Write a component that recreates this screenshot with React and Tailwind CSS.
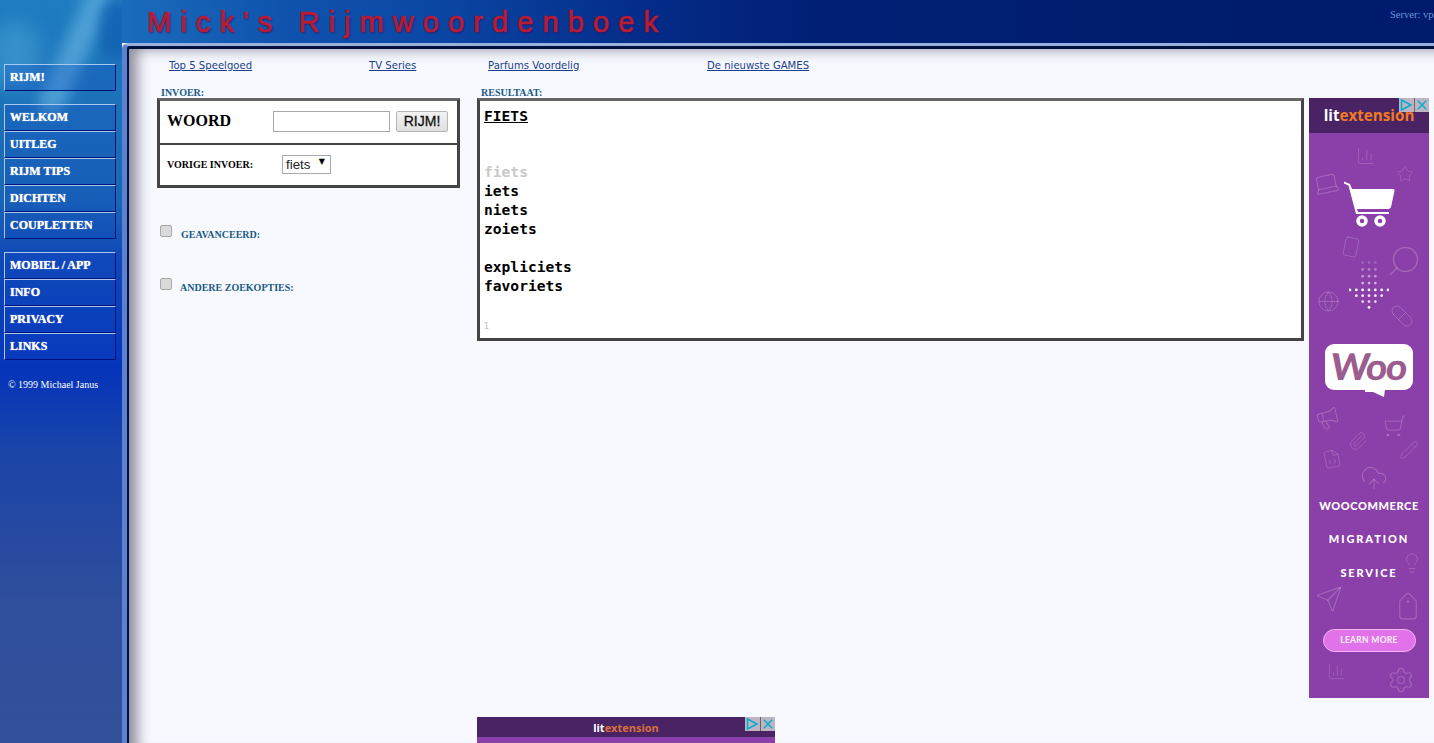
import { BarChart3, Laptop, Star, ShoppingCart, Smartphone, Search, Globe, Pill, Megaphone, Paperclip, Pencil, FileCode, CloudUpload, Lightbulb, Send, Tag, Settings } from "lucide-react";

const menuTop = ["RIJM!"];
const menuMiddle = ["WELKOM", "UITLEG", "RIJM TIPS", "DICHTEN", "COUPLETTEN"];
const menuBottom = ["MOBIEL / APP", "INFO", "PRIVACY", "LINKS"];

//faint icons in the ad background, places relative to the ad body
const adIcons = [
    { Icon: BarChart3, size: 20, cls: "left-[47px] top-[13px]" },
    { Icon: Laptop, size: 27, cls: "left-[4px] top-[37px] -rotate-12" },
    { Icon: Star, size: 18, cls: "left-[87px] top-[32px]" },
    { Icon: Smartphone, size: 22, cls: "left-[31px] top-[103px] rotate-12" },
    { Icon: Search, size: 36, cls: "left-[77px] top-[110px] -scale-x-100" },
    { Icon: Globe, size: 23, cls: "left-[8px] top-[157px]" },
    { Icon: Pill, size: 24, cls: "left-[81px] top-[171px] rotate-90" },
    { Icon: Megaphone, size: 25, cls: "left-[6px] top-[273px] -rotate-12" },
    { Icon: ShoppingCart, size: 24, cls: "left-[74px] top-[281px] -scale-x-100" },
    { Icon: Paperclip, size: 20, cls: "left-[39px] top-[298px]" },
    { Icon: Pencil, size: 20, cls: "left-[90px] top-[307px]" },
    { Icon: FileCode, size: 20, cls: "left-[13px] top-[316px] -rotate-12" },
    { Icon: CloudUpload, size: 28, cls: "left-[51px] top-[331px]" },
    { Icon: Lightbulb, size: 22, cls: "left-[92px] top-[419px]" },
    { Icon: Send, size: 28, cls: "left-[6px] top-[452px]" },
    { Icon: Tag, size: 28, cls: "left-[85px] top-[462px] rotate-45" },
    { Icon: BarChart3, size: 19, cls: "left-[18px] top-[529px]" },
    { Icon: Settings, size: 28, cls: "left-[78px] top-[533px]" },
];

//dots arrow above the woo logo: [cx, cy, opacity]
const dots = [];
[0, 7, 14, 21].forEach((y) => {
    [13, 19.5, 26].forEach((x) => dots.push([x, y, 0.2 + y * 0.02]));
});
[0, 6.5, 13, 19.5, 26, 32.5, 39].forEach((x) => dots.push([x, 28, 1]));
[6.5, 13, 19.5, 26, 32.5].forEach((x) => dots.push([x, 34, 0.9]));
[13, 19.5, 26].forEach((x) => dots.push([x, 40, 0.8]));
dots.push([19.5, 46, 1]);

const MenuItem = ({ label }) => (
    <div className="h-[27px] w-[112px] flex items-center pl-[5px] pb-[1px] border border-t-[#a9c8f0] border-l-[#a9c8f0] border-r-[#00127a] border-b-[#00127a] bg-[#1048c4]/25 text-white font-bold text-[12px] [text-shadow:0_0_1px_#ffffff]">
        {label}
    </div>
);

const AdChoices = () => (
    <div className="absolute right-0 top-0 flex h-[14px] w-[30px] bg-[#d9d9d9]/80">
        <svg width="15" height="14" viewBox="0 0 15 14" fill="none" stroke="#00aecd" strokeWidth="1.5">
            <path d="M2.5 2 L2.5 12 L12 7 Z" />
        </svg>
        <svg width="15" height="14" viewBox="0 0 15 14" fill="none" stroke="#00aecd" strokeWidth="1.5" className="border-l border-[#666]">
            <path d="M3 2.5 L12 11.5 M12 2.5 L3 11.5" />
        </svg>
    </div>
);

const SideAd = () => (
    <div className="relative w-[120px] h-[600px] shrink-0 bg-[#8b3fa8] font-['Lato',sans-serif]">
        <div className="h-[35px] bg-[#4a2365] flex items-center justify-center text-[15.2px] font-['Open_Sans',sans-serif] font-bold leading-none pt-[1px]">
            <span className="text-white">lit</span>
            <span className="text-[#f07a22]">extension</span>
        </div>
        <AdChoices />
        <div className="relative h-[565px] flex flex-col items-center">
            {adIcons.map(({ Icon, size, cls }, i) => (
                <Icon key={i} size={size} strokeWidth={1} className={"absolute text-white/20 " + cls} />
            ))}
            <svg width="52" height="47" viewBox="0 0 52 47" className="mt-[47px] shrink-0" fill="#fff">
                <path d="M1 1.5 L7 4 L9 9 L50 9 Q52 9 51.5 11 L48 27 Q47.5 29 45 29 L14 29 L15 32 L46 32 L46 34 L13 34 L5.5 5.5 L1 3.5 Z" />
                <circle cx="19" cy="41" r="4" fill="none" stroke="#fff" strokeWidth="3.5" />
                <circle cx="37" cy="41" r="4" fill="none" stroke="#fff" strokeWidth="3.5" />
            </svg>
            <svg width="40" height="50" viewBox="-1 -2 41 50" className="mt-[33px] shrink-0" fill="#fff">
                {dots.map(([cx, cy, o], i) => (
                    <circle key={i} cx={cx} cy={cy} r="1.4" opacity={o} />
                ))}
            </svg>
            <div className="relative mt-[34px] w-[88px] h-[46px] bg-white rounded-[9px] flex items-center justify-center shrink-0">
                <span className="text-[#9b5c8f] text-[37px] font-black leading-none tracking-[-1.5px] -mt-[3px] -skew-x-6 font-['Lato',sans-serif]">Woo</span>
                <svg width="20" height="9" viewBox="0 0 20 9" fill="#fff" className="absolute left-[40px] top-[45px]">
                    <path d="M0 0 L20 0 L19 8 L8 3 L0 3 Z" />
                </svg>
            </div>
            <div className="mt-[109px] h-[14px] leading-[14px] text-white font-black text-[11px] tracking-[0.6px]">WOOCOMMERCE</div>
            <div className="mt-[19px] h-[14px] leading-[14px] text-white font-black text-[11px] tracking-[1.9px]">MIGRATION</div>
            <div className="mt-[20px] h-[14px] leading-[14px] text-white font-black text-[11px] tracking-[1.9px]">SERVICE</div>
            <div className="mt-[49px] w-[93px] h-[23px] rounded-full bg-[#e272ea] border border-[#f3b5f5] flex items-center justify-center text-white/90 font-bold text-[8.5px] tracking-[0.3px]">
                LEARN MORE
            </div>
        </div>
    </div>
);

const App = () => {
    return (
        <div className="w-[1434px] h-[743px] overflow-hidden flex font-['Liberation_Serif',serif]">
            {/* sidebar */}
            <div className="relative overflow-hidden w-[122px] h-full shrink-0 pt-[64px] pl-[4px] bg-[linear-gradient(180deg,#1f7cc0_0px,#1c70b8_120px,#1a66b4_200px,#0f48b8_260px,#0534ba_370px,#1a44a8_450px,#2f4e9c_600px,#33509a_743px)]">
                {/* blurred shapes of the hand in the background picture */}
                <div className="absolute left-[62px] -top-[20px] w-[26px] h-[140px] rotate-[25deg] rounded-full bg-[#5fb0de]/70 blur-[7px]"></div>
                <div className="absolute -left-[10px] top-[20px] w-[50px] h-[70px] rounded-full bg-[#3f9ad2]/70 blur-[10px]"></div>
                <div className="absolute left-[100px] top-[0px] w-[30px] h-[60px] rounded-full bg-[#0f5cb0]/70 blur-[6px]"></div>
                <div className="relative">
                    {menuTop.map((m) => <MenuItem key={m} label={m} />)}
                    <div className="mt-[13px]">
                        {menuMiddle.map((m) => <MenuItem key={m} label={m} />)}
                    </div>
                    <div className="mt-[13px]">
                        {menuBottom.map((m) => <MenuItem key={m} label={m} />)}
                    </div>
                    <div className="mt-[19px] pl-[4px] text-white text-[10px] leading-[12px]">© 1999 Michael Janus</div>
                </div>
            </div>

            {/* header and page */}
            <div className="flex-1 min-w-0 h-full flex flex-col">
                <div className="h-[43px] shrink-0 flex justify-between bg-[linear-gradient(90deg,#1b6cbc_0px,#0f53ae_160px,#0c48a6_300px,#042c88_520px,#001f74_700px,#001a6c_1312px)]">
                    <div className="pl-[25px] pt-[5px] text-[29px] leading-[34px] text-[#b81c34] tracking-[9.1px] font-['Liberation_Sans',sans-serif] [-webkit-text-stroke:0.7px_#b81c34] [text-shadow:1px_1px_2px_#2a1060] whitespace-nowrap">
                        Mick's Rijmwoordenboek
                    </div>
                    <div className="pt-[9px] w-[44px] overflow-hidden whitespace-nowrap text-[10.5px] leading-[12px] text-[#6d94dc]">Server: vps1</div>
                </div>
                <div className="flex-1 min-h-0 border-t-[3px] border-l-[5px] border-t-[#98b0dc] border-l-[#5a82d0] rounded-tl-[6px] bg-[#1a5ab8]">
                    <div className="h-full border-t-[3px] border-l-[2px] border-[#00103f] rounded-tl-[3px] bg-[#f7f9ff] shadow-[inset_14px_6px_14px_-6px_#8a8a9a] pl-[28px] overflow-hidden">
                        <div className="pt-[11px] pl-[12px] h-[38px] flex font-['DejaVu_Sans',sans-serif] text-[10.1px] leading-[12px] text-[#1c3f8c] underline">
                            <div className="w-[200px]">Top 5 Speelgoed</div>
                            <div className="w-[119px]">TV Series</div>
                            <div className="w-[219px]">Parfums Voordelig</div>
                            <div>De nieuwste GAMES</div>
                        </div>
                        <div className="flex">
                            {/* left column */}
                            <div className="w-[303px] shrink-0">
                                <div className="h-[11px] pl-[4px] text-[10px] leading-[11px] font-bold text-[#1a5a84]">INVOER:</div>
                                <div className="h-[90px] border-[3px] border-[#444] border-t-[#666] bg-white flex flex-col">
                                    <div className="h-[42px] flex items-center pl-[7px] pb-[2px]">
                                        <div className="w-[106px] text-[16px] font-bold text-black">WOORD</div>
                                        <input type="text" className="w-[117px] h-[21px] border border-[#a9a9a9] bg-white" />
                                        <button className="ml-[6px] w-[52px] h-[21px] border border-[#b5b5b5] rounded-[2px] bg-[linear-gradient(180deg,#f2f2f2,#e0e0e0)] font-['Liberation_Sans',sans-serif] text-[14px] leading-none text-[#111] [-webkit-text-stroke:0.3px_#111]">RIJM!</button>
                                    </div>
                                    <div className="flex-1 border-t-2 border-[#444] flex items-center pl-[7px] pb-[2px]">
                                        <div className="w-[115px] text-[10px] font-bold text-black">VORIGE INVOER:</div>
                                        <div className="relative">
                                            <select className="w-[49px] h-[19px] border border-[#a9a9a9] bg-white pl-[3px] appearance-none font-['Liberation_Sans',sans-serif] text-[13.3px] leading-none text-[#222]">
                                                <option>fiets</option>
                                            </select>
                                            <span className="absolute right-[6px] top-[4px] font-['DejaVu_Sans',sans-serif] text-[8px] leading-[12px] text-black">▼</span>
                                        </div>
                                    </div>
                                </div>
                                <div className="mt-[37px] h-[12px] flex items-start pl-[3px]">
                                    <input type="checkbox" className="appearance-none w-[12px] h-[12px] rounded-[2px] border border-[#a8a8a8] bg-[#dadada]" />
                                    <span className="ml-[9px] mt-[4px] text-[10px] leading-[12px] font-bold text-[#1a5a84] whitespace-nowrap">GEAVANCEERD:</span>
                                </div>
                                <div className="mt-[41px] h-[12px] flex items-start pl-[3px]">
                                    <input type="checkbox" className="appearance-none w-[12px] h-[12px] rounded-[2px] border border-[#a8a8a8] bg-[#dadada]" />
                                    <span className="ml-[8px] mt-[4px] text-[10px] leading-[12px] font-bold text-[#1a5a84] whitespace-nowrap">ANDERE ZOEKOPTIES:</span>
                                </div>
                            </div>

                            {/* result column */}
                            <div className="ml-[17px] w-[827px] shrink-0">
                                <div className="h-[11px] pl-[4px] text-[10px] leading-[11px] font-bold text-[#1a5a84]">RESULTAAT:</div>
                                <div className="h-[243px] border-[3px] border-[#444] border-t-[#666] bg-white pl-[4px] pt-[5px] font-['DejaVu_Sans_Mono',monospace] font-bold text-[14.6px] leading-[19px] text-black">
                                    <div className="underline">FIETS</div>
                                    <div className="h-[37px]"></div>
                                    <div className="text-[#c8c8c8]">fiets</div>
                                    <div>iets</div>
                                    <div>niets</div>
                                    <div>zoiets</div>
                                    <div className="h-[19px]"></div>
                                    <div>expliciets</div>
                                    <div>favoriets</div>
                                    <div className="mt-[27px] text-[8px] leading-[10px] font-normal text-[#bbb]">1</div>
                                </div>
                                <div className="relative mt-[376px] w-[298px] h-[40px] bg-[#8b3fa8]">
                                    <div className="h-[20px] bg-[#4a2365] flex items-center justify-center font-['Open_Sans',sans-serif] font-bold text-[11px] leading-none">
                                        <span className="text-white">lit</span>
                                        <span className="text-[#d8703a]">extension</span>
                                    </div>
                                    <AdChoices />
                                </div>
                            </div>

                            <div className="ml-[5px] pt-[11px]">
                                <SideAd />
                            </div>
                        </div>
                    </div>
                </div>
            </div>
        </div>
    );
};

export default App;
